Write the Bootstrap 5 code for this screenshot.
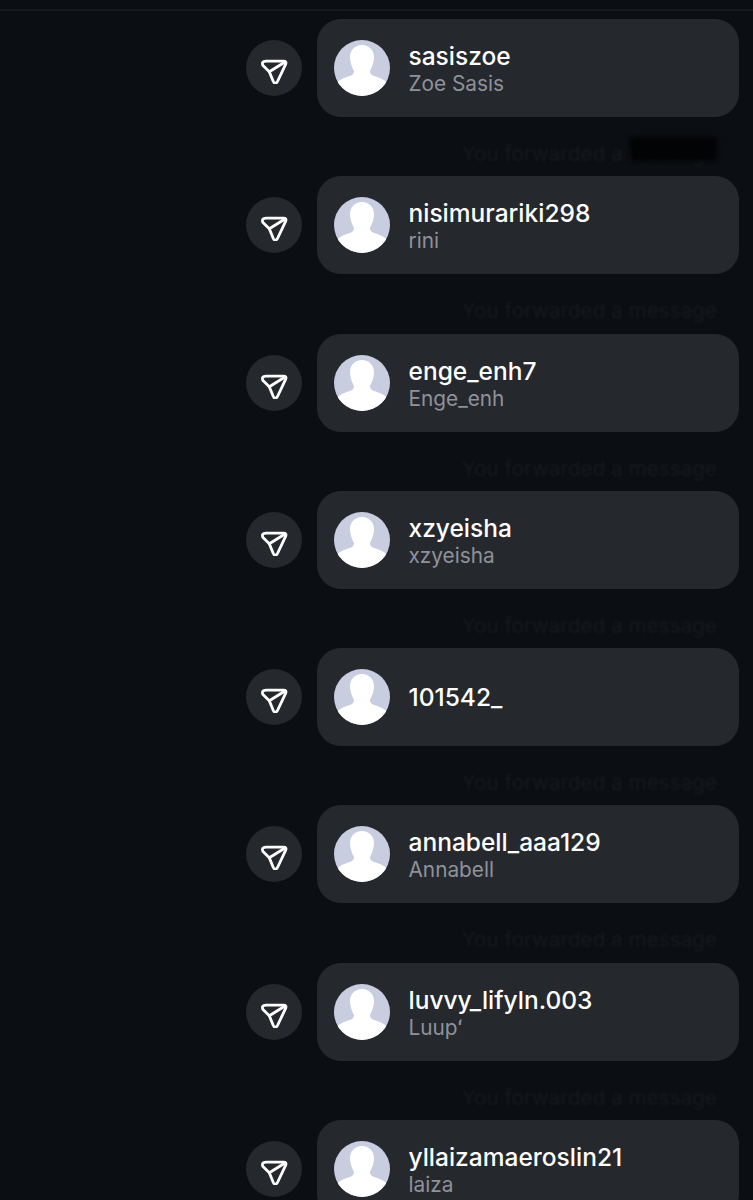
<!DOCTYPE html>
<html lang="en">
<head>
    <meta charset="UTF-8">
    <meta name="viewport" content="width=device-width, initial-scale=1.0">
    <title>Messages</title>
    <link href="https://cdn.jsdelivr.net/npm/bootstrap@5.3.0/dist/css/bootstrap.min.css" rel="stylesheet">
    <style>
        body {
            background-color: #0b0e12;
            font-family: 'Inter', sans-serif;
            height: 1200px;
            overflow: hidden;
        }

        .top-strip {
            height: 11px;
            border-bottom: 2px solid #15181c;
            margin-bottom: 8px;
        }

        .thread {
            padding-right: 14px;
        }

        .row-gap {
            gap: 15px;
        }

        .send-btn {
            width: 56px;
            height: 56px;
            background-color: #25282d;
        }

        .profile-bubble {
            width: 422px;
            height: 98px;
            padding-left: 17px;
            gap: 18.5px;
            background-color: #25282d;
            border-radius: 24px;
        }

        .avatar-pic {
            width: 56px;
            height: 56px;
        }

        .name-stack {
            padding-bottom: 1px;
        }

        .name-stack.has-sub {
            padding-top: 4px;
            padding-bottom: 0;
        }

        .user-name {
            color: #fff;
            font-size: 24.5px;
            font-weight: 550;
            line-height: 26px;
        }

        .real-name {
            color: #8e929a;
            font-size: 20.8px;
            line-height: 26px;
            margin-top: 2px;
        }

        .forward-note {
            height: 59.25px;
            padding-top: 14px;
            padding-right: 22px;
            color: #171a1e;
            font-size: 20.7px;
        }

        .forward-text {
            filter: blur(1.2px);
        }

        .scribble {
            top: 20px;
            right: 22px;
            width: 87px;
            height: 24px;
            background-color: #020304;
            border-radius: 4px;
            filter: blur(2px);
        }
    </style>
</head>

<body>
    <div class="top-strip"></div>
    <main class="thread" id="thread"></main>

    <script src="https://cdn.jsdelivr.net/npm/bootstrap@5.3.0/dist/js/bootstrap.bundle.min.js"></script>
    <script>
    const profiles = [
        ['sasiszoe', 'Zoe Sasis'],
        ['nisimurariki298', 'rini'],
        ['enge_enh7', 'Enge_enh'],
        ['xzyeisha', 'xzyeisha'],
        ['101542_', ''],
        ['annabell_aaa129', 'Annabell'],
        ['luvvy_lifyln.003', 'Luup\u02BB'],
        ['yllaizamaeroslin21', 'laiza']
    ];

    const sendIcon = `<svg width="32" height="32" viewBox="0 0 32 32" fill="none" stroke="#fff" stroke-width="2.8" stroke-linejoin="round" stroke-linecap="round">
        <path d="M8 9.2 H25.5 Q29 9.2 27.6 12.4 L19.5 29.5 Q17 33 15.3 29.5 L11.3 19.7 L5 13.6 Q3 9.2 8 9.2 Z"/>
        <path d="M11.3 19.7 L27 10"/>
    </svg>`;

    const avatar = `<svg class="avatar-pic rounded-circle flex-shrink-0" viewBox="0 0 56 56">
        <rect width="56" height="56" fill="#c8cde0"/>
        <path d="M28 5 C35 5 40 10 40 17 C40 23 37.5 28 36 31 C36 33 37 35 40 36 C45 37.5 50 39 56 45 V56 H0 V45 C6 39 11 37.5 16 36 C19 35 20 33 20 31 C18.5 28 16 23 16 17 C16 10 21 5 28 5 Z" fill="#fff"/>
    </svg>`;

    const thread = document.getElementById('thread');
    profiles.forEach(([user, name], i) => {
        const sub = name ? `<div class="real-name">${name}</div>` : '';
        // first note has the end of the line scribbled over, last row runs off the page
        const scribble = i === 0 ? '<div class="scribble position-absolute"></div>' : '';
        const note = i < profiles.length - 1
            ? `<div class="forward-note position-relative d-flex align-items-center justify-content-end"><span class="forward-text">You forwarded a message</span>${scribble}</div>`
            : '';
        thread.insertAdjacentHTML('beforeend', `
            <div class="d-flex justify-content-end align-items-center row-gap">
                <div class="send-btn rounded-circle d-flex align-items-center justify-content-center">${sendIcon}</div>
                <div class="profile-bubble d-flex align-items-center">
                    ${avatar}
                    <div class="name-stack ${name ? 'has-sub' : ''}">
                        <div class="user-name">${user}</div>
                        ${sub}
                    </div>
                </div>
            </div>
            ${note}`);
    });
    </script>
</body>
</html>
